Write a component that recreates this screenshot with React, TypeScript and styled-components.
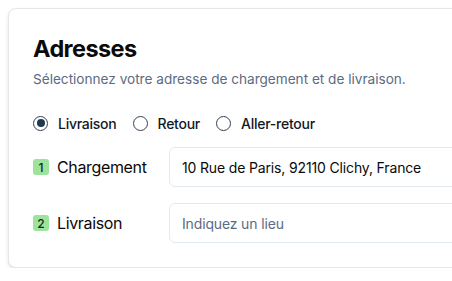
import React, { useState } from "react";
import styled, { createGlobalStyle } from "styled-components";

const GlobalStyle = createGlobalStyle`
  body {
    margin: 0;
    background: #ffffff;
    font-family: Inter, "Noto Sans", sans-serif;
    color: #0f172a;
    overflow: hidden;
  }
`;

const Page = styled.div`
  padding: 8px 0 0 8px;
`;

const Card = styled.section`
  width: 500px;
  box-sizing: border-box;
  padding: 24px;
  background: #ffffff;
  border: 1px solid #e5e7eb;
  border-radius: 8px;
  box-shadow: 0 2px 4px rgba(0, 0, 0, 0.08), 0 1px 2px rgba(0, 0, 0, 0.06);
`;

const Title = styled.h2`
  margin: 0;
  font-size: 23.5px;
  line-height: 32px;
  font-weight: 700;
  letter-spacing: -0.6px;
  color: #0a0a0a;
`;

const Subtitle = styled.p`
  margin: 4px 0 0;
  font-size: 13.6px;
  line-height: 20px;
  color: #5b6b82;
`;

const RadioGroup = styled.div`
  display: flex;
  align-items: center;
  margin-top: 22px;
  height: 24px;
`;

const RadioOption = styled.label`
  display: flex;
  align-items: center;
  gap: 10px;
  margin-right: 16px;
  font-size: 14px;
  font-weight: 500;
  letter-spacing: -0.25px;
  color: #111827;
  cursor: pointer;
`;

const RadioCircle = styled.span<{ $checked: boolean }>`
  width: 15px;
  height: 15px;
  box-sizing: border-box;
  border-radius: 50%;
  border: 1.5px solid #334155;
  display: flex;
  align-items: center;
  justify-content: center;

  &::after {
    content: "";
    width: 8px;
    height: 8px;
    border-radius: 50%;
    background: #1f3a4d;
    display: ${(p) => (p.$checked ? "block" : "none")};
  }
`;

const Fields = styled.div`
  display: flex;
  flex-direction: column;
  gap: 16px;
  margin-top: 12px;
`;

const FieldRow = styled.div`
  display: grid;
  grid-template-columns: 136px 1fr;
  align-items: center;
`;

const FieldLabel = styled.div`
  display: flex;
  align-items: center;
  gap: 8px;
  font-size: 16px;
  letter-spacing: -0.35px;
  color: #0a0a0a;
`;

const Badge = styled.span`
  width: 16px;
  height: 16px;
  border-radius: 3px;
  background: #9de39c;
  color: #0f2a14;
  font-size: 12px;
  font-weight: 500;
  letter-spacing: 0;
  display: flex;
  align-items: center;
  justify-content: center;
`;

const Input = styled.input`
  height: 40px;
  box-sizing: border-box;
  width: 100%;
  padding: 0 12px;
  border: 1px solid #e2e8f0;
  border-radius: 6px;
  font-family: inherit;
  font-size: 14px;
  letter-spacing: -0.15px;
  color: #0a0a0a;
  outline: none;

  &::placeholder {
    color: #5b6b82;
  }
`;

const options = ["Livraison", "Retour", "Aller-retour"];

export default function App() {
  const [mode, setMode] = useState("Livraison");

  return (
    <Page>
      <GlobalStyle />
      <Card>
        <Title>Adresses</Title>
        <Subtitle>Sélectionnez votre adresse de chargement et de livraison.</Subtitle>
        <RadioGroup>
          {options.map((o) => (
            <RadioOption key={o} onClick={() => setMode(o)}>
              <RadioCircle $checked={mode === o} />
              {o}
            </RadioOption>
          ))}
        </RadioGroup>
        <Fields>
          <FieldRow>
            <FieldLabel>
              <Badge>1</Badge>
              Chargement
            </FieldLabel>
            <Input defaultValue="10 Rue de Paris, 92110 Clichy, France" />
          </FieldRow>
          <FieldRow>
            <FieldLabel>
              <Badge>2</Badge>
              Livraison
            </FieldLabel>
            <Input placeholder="Indiquez un lieu" />
          </FieldRow>
        </Fields>
      </Card>
    </Page>
  );
}
